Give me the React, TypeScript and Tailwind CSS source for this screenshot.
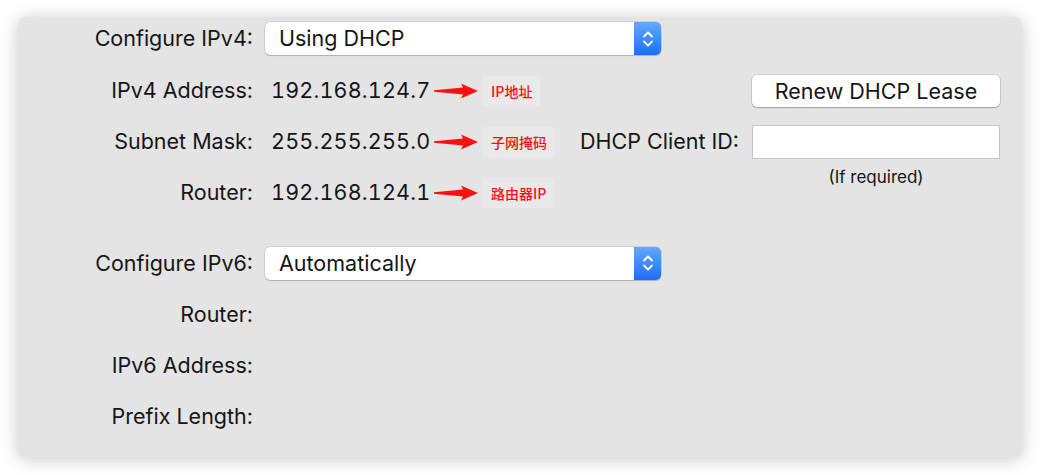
import React from 'react';

const Arrow = () => (
	<svg width="44" height="16" viewBox="0 0 44 16" className="shrink-0">
		<polygon points="0,7.2 29,4.5 27,0.5 44,8 27,15.5 29,11.5 0,8.8" fill="#ff1010" />
	</svg>
);

const Note = ({ text }: { text: string }) => (
	<span className="ml-[5px] px-[8px] py-[6px] bg-[#e9e9e9] text-[#ff0d0d] text-[14px] leading-[18px] font-medium font-['Noto_Sans_CJK_SC',sans-serif]">
		{text}
	</span>
);

const Popup = ({ value }: { value: string }) => (
	<div className="ml-[12px] flex h-[33px] w-[396px] rounded-[5px] bg-white shadow-[0_0_0_0.5px_rgba(0,0,0,0.18),0_1px_1px_rgba(0,0,0,0.15)] overflow-hidden">
		<div className="flex-1 pl-[14px] flex items-center">{value}</div>
		<div className="w-[27px] flex items-center justify-center bg-gradient-to-b from-[#62a8fc] to-[#1a6ef6]">
			<svg width="12" height="20" viewBox="0 0 12 20" fill="none" stroke="white" strokeWidth="1.8" strokeLinecap="round" strokeLinejoin="round">
				<path d="M2 7.5 L6 3.5 L10 7.5" />
				<path d="M2 12.5 L6 16.5 L10 12.5" />
			</svg>
		</div>
	</div>
);

const Label = ({ text }: { text: string }) => (
	<div className="w-[235px] shrink-0 text-right">{text}</div>
);

const Value = ({ text }: { text: string }) => (
	<div className="ml-[18px] w-[163px] whitespace-nowrap tabular-nums tracking-[0.2px]">{text}</div>
);

const App = () => {
	return (
		<div className="w-[1040px] h-[475px] bg-white pt-[17px] pl-[18px] font-['Inter',sans-serif] text-[21.5px] text-[#151515]">
			<div className="w-[1004px] h-[440px] rounded-[7px] bg-[#e4e4e4] shadow-[0_2px_18px_rgba(0,0,0,0.22)] pt-[5px] pr-[22px] flex flex-col">
				<div className="flex items-center h-[33px]">
					<Label text="Configure IPv4:" />
					<Popup value="Using DHCP" />
				</div>

				<div className="mt-[10px] flex items-center h-[51px]">
					<Label text="IPv4 Address:" />
					<Value text="192.168.124.7" />
					<Arrow />
					<Note text="IP地址" />
					<div className="flex-1" />
					<button className="w-[248px] h-[32px] rounded-[5px] bg-white shadow-[0_0_0_0.5px_rgba(0,0,0,0.15),0_1px_1.5px_rgba(0,0,0,0.25)]">
						Renew DHCP Lease
					</button>
				</div>

				<div className="flex items-center h-[51px]">
					<Label text="Subnet Mask:" />
					<Value text="255.255.255.0" />
					<Arrow />
					<Note text="子网掩码" />
					<div className="flex-1" />
					<div>DHCP Client ID:</div>
					<div className="ml-[13px] w-[248px] h-[34px] bg-white border border-[#c4c4c4]" />
				</div>

				<div className="flex items-center h-[51px]">
					<Label text="Router:" />
					<Value text="192.168.124.1" />
					<Arrow />
					<Note text="路由器IP" />
					<div className="flex-1" />
					<div className="self-start w-[248px] text-center text-[17px] leading-[20px]">(If required)</div>
				</div>

				<div className="mt-[29px] flex items-center h-[32px]">
					<Label text="Configure IPv6:" />
					<Popup value="Automatically" />
				</div>

				<div className="mt-[10px] flex items-center h-[51px]">
					<Label text="Router:" />
				</div>
				<div className="flex items-center h-[51px]">
					<Label text="IPv6 Address:" />
				</div>
				<div className="flex items-center h-[51px]">
					<Label text="Prefix Length:" />
				</div>
			</div>
		</div>
	);
};

export default App;
